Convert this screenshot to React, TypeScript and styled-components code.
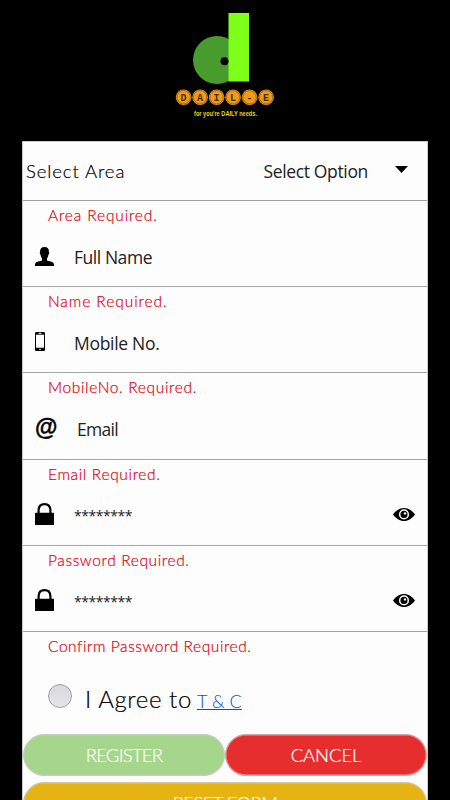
import React from "react";
import styled, { createGlobalStyle } from "styled-components";

const GlobalStyle = createGlobalStyle`
  html, body { margin: 0; background: #000; }
  body { height: 800px; overflow: hidden; }
  * { box-sizing: border-box; }
`;

const round = `Lato, "Liberation Sans", sans-serif`;
const plain = `"Open Sans", "Noto Sans", sans-serif`;

const Screen = styled.main`
  width: 450px;
  height: 800px;
  overflow: hidden;
  background: #000;
`;
const Header = styled.header`
  height: 141px;
  display: flex;
  justify-content: center;
`;
const Logo = styled.svg`
  width: 130px;
  height: 130px;
  display: block;
`;
const Panel = styled.form`
  width: 406px;
  height: 700px;
  margin: 0 0 0 22px;
  background: #fdfdfd;
  border: 1px solid #c9c9c9;
  border-bottom: 0;
`;
const SelectRow = styled.div`
  height: 59px;
  display: flex;
  align-items: center;
  padding: 0 19px 0 3px;
  border-bottom: 1px solid #a0a0a0;
`;
const SelectLabel = styled.span`
  flex: 1;
  font: 300 18.5px/24px ${round};
  letter-spacing: 0.9px;
  color: #000;
  -webkit-text-stroke: 0.2px #000;
`;
const SelectValue = styled.span`
  font: 400 17.5px/24px ${plain};
  letter-spacing: -0.35px;
  color: #222;
  margin-right: 27px;
`;
const Caret = styled.svg`
  width: 13px;
  height: 7px;
  margin-top: -3px;
`;
const Group = styled.div`
  height: 86.2px;
  border-bottom: 1px solid #a4a4a4;
`;
const ErrorText = styled.p<{ $spacing: number }>`
  height: 27px;
  margin: 0;
  padding: 0 0 0 25px;
  font: 300 15.5px/28px ${round};
  letter-spacing: ${(p) => p.$spacing}px;
  color: #e00010;
  -webkit-text-stroke: 0.2px #e00010;
  white-space: nowrap;
`;
const Field = styled.div<{ $raised?: boolean }>`
  height: ${(p) => (p.$raised ? 55 : 58)}px;
  display: flex;
  align-items: center;
  padding: 0 12px 0 12px;
`;
const IconSlot = styled.span<{ $w: number; $lift: number }>`
  width: ${(p) => p.$w}px;
  flex: none;
  display: flex;
  align-items: center;
  padding-bottom: ${(p) => p.$lift}px;
`;
const Value = styled.span<{ $spacing: number; $mask?: boolean }>`
  flex: 1;
  font: 400 ${(p) => (p.$mask ? 14 : 17.5)}px/24px ${plain};
  letter-spacing: ${(p) => p.$spacing}px;
  color: #222;
  padding-top: ${(p) => (p.$mask ? 3 : 0)}px;
`;
const Agree = styled.div`
  height: 75px;
  display: flex;
  align-items: center;
  padding: 2px 0 0 25px;
`;
const Radio = styled.span`
  width: 24px;
  height: 24px;
  border-radius: 50%;
  border: 1.5px solid #a1a1a1;
  background: linear-gradient(#d9d9db, #e5e5e7);
  margin: 0 13px 3px 0;
`;
const AgreeText = styled.span`
  font: 300 24px/30px ${round};
  letter-spacing: 0.6px;
  color: #000;
  -webkit-text-stroke: 0.2px #000;
  padding-top: 3px;
`;
const Terms = styled.a`
  font: 300 18px/24px ${round};
  letter-spacing: 0.1px;
  color: #0049f5;
  text-decoration: underline;
  margin: 7px 0 0 5px;
`;
const Buttons = styled.div`
  display: grid;
  grid-template-columns: 1fr 1fr;
  gap: 6px 0;
`;
const Button = styled.button<{ $bg: string; $edge: string; $spacing: number; $wide?: boolean }>`
  grid-column: ${(p) => (p.$wide ? "1 / -1" : "auto")};
  height: 42px;
  padding: 0;
  border: 1px solid ${(p) => p.$edge};
  border-radius: 21px;
  background: ${(p) => p.$bg};
  box-shadow: inset 0 0 0 0.5px ${(p) => p.$edge};
  color: #fff;
  font: 300 18.5px/38px ${round};
  -webkit-text-stroke: 0.2px #fff;
  letter-spacing: ${(p) => p.$spacing}px;
`;

const PersonIcon = () => (
  <svg width="19" height="19" viewBox="0 0 19 19">
    <path d="M9.500 0C6.200 0 4.900 1.800 5.100 5c-.7.7-.2 2.200.5 2.700.2 1.700.8 2.800 1.400 3.800v2C6 14.300 0 14.200 0 17.500V19h19v-1.500c0-3.300-6-3.200-7-4v-2c.6-1 1.200-2.100 1.400-3.800.7-.5 1.200-2 .5-2.700C14.100 1.800 12.800 0 9.500 0Z" />
  </svg>
);
const PhoneIcon = () => (
  <svg width="10" height="19" viewBox="0 0 10 19">
    <rect width="10" height="19" rx="1.3" />
    <rect x="1" y="2.700" width="8" height="13" fill="#fdfdfd" />
    <path d="M3.500 1.300h3M4.200 17.300h1.600" stroke="#fdfdfd" strokeWidth="1" />
  </svg>
);
const AtIcon = styled.span`
  font: 700 23px/24px "Liberation Sans", sans-serif;
  color: #000;
  -webkit-text-stroke: 0.4px #000;
`;
const LockIcon = () => (
  <svg width="19" height="22" viewBox="0 0 19 22">
    <path d="M3.600 10.500V7.500C3.600 3.500 5.800 1.200 9.500 1.200s5.900 2.300 5.900 6.300v3" fill="none" stroke="#000" strokeWidth="2.200" />
    <rect y="9.800" width="19" height="12.200" rx=".5" />
  </svg>
);
const EyeIcon = () => (
  <svg width="22" height="13" viewBox="0 0 22 13">
    <path d="M0 6.500C3 2.500 6.500 0 11 0s8 2.500 11 6.500C19 10.500 15.500 13 11 13S3 10.500 0 6.500Z" />
    <circle cx="11" cy="6.400" r="4.300" fill="none" stroke="#fdfdfd" strokeWidth="1.500" />
    <circle cx="12" cy="5.400" r="1.200" fill="#fdfdfd" />
  </svg>
);

const fields = [
  { value: "Full Name", error: "Name Required.", icon: <PersonIcon />, slot: 39, lift: 2, gap: -0.45 },
  { value: "Mobile No.", error: "MobileNo. Required.", icon: <PhoneIcon />, slot: 39, lift: 3, gap: -0.3 },
  { value: "Email", error: "Email Required.", icon: <AtIcon>@</AtIcon>, slot: 42, lift: 4, gap: -0.7 },
  { value: "********", error: "Password Required.", icon: <LockIcon />, slot: 39, lift: 0, gap: -0.45, eye: true },
  { value: "********", error: "Confirm Password Required.", icon: <LockIcon />, slot: 39, lift: 0, gap: -0.45, eye: true },
];
const spacings = [0.93, 0.66, 0.67, 0.62, 0.57];

export default function App() {
  return (
    <>
      <GlobalStyle />
      <Screen>
        <Header>
          <Logo viewBox="160 0 130 130">
            <circle cx="217" cy="60" r="24" fill="#489b2d" />
            <rect x="228.500" y="13" width="20.500" height="68.500" fill="#7dff17" />
            <circle cx="224.500" cy="61.300" r="4" fill="#000" />
            {"DAIL-E".split("").map((c, i) => (
              <g key={i}>
                <circle cx={183.6 + i * 16.5} cy="97.200" r="7.800" fill="#ee9b1c" />
                <circle cx={183.6 + i * 16.5} cy="97.200" r="6.700" fill="none" stroke="#5b3a08" strokeWidth=".5" />
                <text x={183.6 + i * 16.5} y="100.500" textAnchor="middle" fontFamily="Liberation Mono, monospace" fontWeight="700" fontSize="10" fill="#4a3005">{c}</text>
              </g>
            ))}
            <text x="194" y="116" textLength="63" lengthAdjust="spacingAndGlyphs" fontFamily="Liberation Sans, sans-serif" fontWeight="700" fontSize="8" fill="#e8d51a">for you're DAILY needs.</text>
          </Logo>
        </Header>
        <Panel>
          <SelectRow>
            <SelectLabel>Select Area</SelectLabel>
            <SelectValue>Select Option</SelectValue>
            <Caret viewBox="0 0 13 7"><path d="M0 0h13L6.500 7z" /></Caret>
          </SelectRow>
          {fields.map((f, i) => (
            <Group key={i}>
              <ErrorText $spacing={i === 0 ? 0.85 : spacings[i - 1]}>{i === 0 ? "Area Required." : fields[i - 1].error}</ErrorText>
              <Field $raised={f.eye}>
                <IconSlot $w={f.slot} $lift={f.lift}>{f.icon}</IconSlot>
                <Value $spacing={f.gap} $mask={f.eye}>{f.value}</Value>
                {f.eye && <EyeIcon />}
              </Field>
            </Group>
          ))}
          <ErrorText $spacing={spacings[4]}>{fields[4].error}</ErrorText>
          <Agree>
            <Radio />
            <AgreeText>I Agree to</AgreeText>
            <Terms>T &amp; C</Terms>
          </Agree>
          <Buttons>
            <Button type="button" $bg="#a5d68c" $edge="#c3cdbd" $spacing={-0.75}>REGISTER</Button>
            <Button type="button" $bg="#e62e2e" $edge="#d9a5a5" $spacing={-0.1}>CANCEL</Button>
            <Button type="button" $bg="#e6b412" $edge="#d3c79c" $spacing={-0.6} $wide>RESET FORM</Button>
          </Buttons>
        </Panel>
      </Screen>
    </>
  );
}
